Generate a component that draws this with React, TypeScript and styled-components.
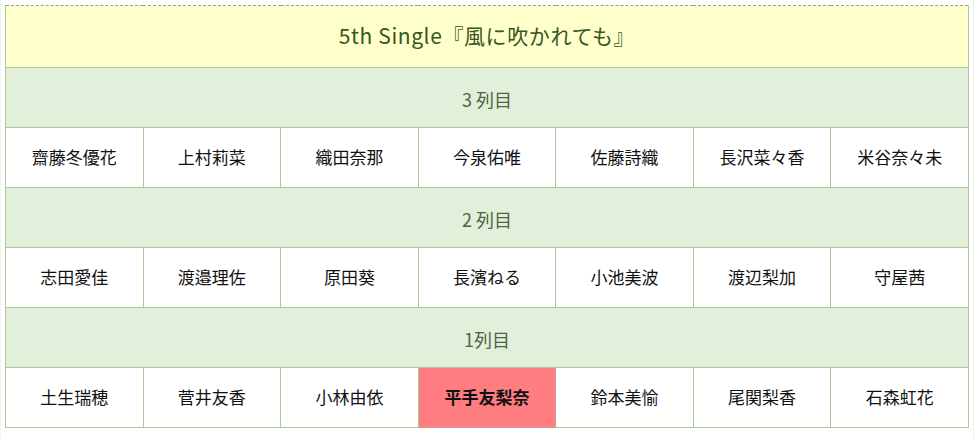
import React from "react";
import styled, { createGlobalStyle } from "styled-components";

const GlobalStyle = createGlobalStyle`
  html, body {
    margin: 0;
    padding: 0;
    background: #fff;
  }
  body {
    font-family: "Noto Sans CJK JP", "Noto Sans", sans-serif;
  }
`;

// formation rows, back to front
const rows: { label: string; members: string[] }[] = [
  {
    label: "3 列目",
    members: ["齋藤冬優花", "上村莉菜", "織田奈那", "今泉佑唯", "佐藤詩織", "長沢菜々香", "米谷奈々未"],
  },
  {
    label: "2 列目",
    members: ["志田愛佳", "渡邉理佐", "原田葵", "長濱ねる", "小池美波", "渡辺梨加", "守屋茜"],
  },
  {
    label: "1列目",
    members: ["土生瑞穂", "菅井友香", "小林由依", "平手友梨奈", "鈴本美愉", "尾関梨香", "石森虹花"],
  },
];

const CENTER = "平手友梨奈";

export default function App() {
  return (
    <>
      <GlobalStyle />
      <Frame>
        <Formation>
          <tbody>
            <tr>
              <Title colSpan={7}>5th Single『風に吹かれても』</Title>
            </tr>
            {rows.map((row) => (
              <React.Fragment key={row.label}>
                <tr>
                  <RowLabel colSpan={7}>{row.label}</RowLabel>
                </tr>
                <tr>
                  {row.members.map((name) => (
                    <Member key={name} $center={name === CENTER}>
                      {name}
                    </Member>
                  ))}
                </tr>
              </React.Fragment>
            ))}
          </tbody>
        </Formation>
      </Frame>
    </>
  );
}

const Frame = styled.div`
  width: 974px;
  height: 439px;
  padding: 5px 0 0 4px;
  box-sizing: border-box;
  border-right: 1px dotted #e2e2e2;
  border-left: 1px dotted #e8e8e8;
`;

const Formation = styled.table`
  width: 964px;
  border-collapse: collapse;
  border: 1px dashed #9a9a9a;
  table-layout: fixed;

  td {
    border: 1px solid #acc99a;
    text-align: center;
    padding: 0;
    line-height: 1.3;
    box-sizing: content-box;
  }
`;

const Title = styled.td`
  && {
    border-top: 1px dashed #9a9a9a;
    padding-bottom: 2px;
  }
  height: 59px;
  background: #ffffcc;
  color: #375623;
  font-size: 21px;
  letter-spacing: 0.6px;
`;

const RowLabel = styled.td`
  && {
    padding-top: 4px;
  }
  height: 55px;
  background: #e2efda;
  color: #4e6440;
  font-size: 18px;
`;

const Member = styled.td<{ $center?: boolean }>`
  height: 59px;
  background: ${(p) => (p.$center ? "#ff7c80" : "#ffffff")};
  color: #111;
  font-size: 17px;
  font-weight: ${(p) => (p.$center ? 700 : 400)};
  ${(p) => (p.$center ? "&& { border-color: #c9a48a; }" : "")}
`;
